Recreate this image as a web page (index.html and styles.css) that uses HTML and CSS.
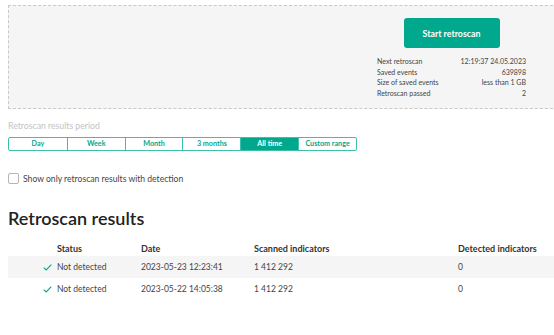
FILE: index.html
```html
<!DOCTYPE html>
<html>
<head>
<meta charset="utf-8">
<link rel="stylesheet" href="styles.css">
</head>
<body>
<div class="page">
  <section class="panel">
    <div class="scan-box">
      <button class="btn-start">Start retroscan</button>
      <div class="info">
        <div class="info-row"><span>Next retroscan</span><span>12:19:37 24.05.2023</span></div>
        <div class="info-row"><span>Saved events</span><span>639898</span></div>
        <div class="info-row"><span>Size of saved events</span><span>less than 1 GB</span></div>
        <div class="info-row"><span>Retroscan passed</span><span>2</span></div>
      </div>
    </div>
  </section>

  <div class="period-label">Retroscan results period</div>
  <div class="segments">
    <div class="seg">Day</div>
    <div class="seg">Week</div>
    <div class="seg">Month</div>
    <div class="seg">3 months</div>
    <div class="seg active">All time</div>
    <div class="seg">Custom range</div>
  </div>

  <label class="check">
    <span class="box"></span>
    <span>Show only retroscan results with detection</span>
  </label>

  <h1 class="title">Retroscan results</h1>

  <div class="table">
    <div class="trow head">
      <span></span><span>Status</span><span>Date</span><span>Scanned indicators</span><span>Detected indicators</span>
    </div>
    <div class="trow odd">
      <span class="ic"><svg width="9" height="7" viewBox="0 0 9 7"><path d="M0.7 3.6 L3.2 6 L8.3 0.7" fill="none" stroke="#00a88e" stroke-width="1.1"/></svg></span>
      <span>Not detected</span><span>2023-05-23 12:23:41</span><span>1 412 292</span><span>0</span>
    </div>
    <div class="trow">
      <span class="ic"><svg width="9" height="7" viewBox="0 0 9 7"><path d="M0.7 3.6 L3.2 6 L8.3 0.7" fill="none" stroke="#00a88e" stroke-width="1.1"/></svg></span>
      <span>Not detected</span><span>2023-05-22 14:05:38</span><span>1 412 292</span><span>0</span>
    </div>
  </div>
</div>
</body>
</html>
```
FILE: styles.css
```css
html, body {
  margin: 0;
  padding: 0;
  overflow: hidden;
  background: #fff;
}
body {
  font-family: Lato, "Noto Sans", sans-serif;
  color: #333;
}
.page {
  width: 600px;
  padding: 5px 0 0 8px;
}
.panel {
  width: 560px;
  height: 104px;
  box-sizing: border-box;
  border: 1px dashed #c9c9c9;
  background: #f5f5f5;
  display: flex;
  justify-content: flex-end;
  padding: 12px 41px 0 0;
}
.scan-box {
  width: 149px;
  display: flex;
  flex-direction: column;
  align-items: center;
}
.btn-start {
  width: 96px;
  height: 30px;
  border: none;
  border-radius: 3px;
  background: #00a88e;
  color: #fff;
  font-family: inherit;
  font-size: 8.8px;
  font-weight: 700;
  padding: 0;
}
.info {
  width: 100%;
  margin-top: 8px;
  font-size: 7px;
  color: #444;
}
.info-row {
  display: flex;
  justify-content: space-between;
  height: 10.5px;
  line-height: 10.5px;
}
.period-label {
  margin-top: 11px;
  font-size: 8.7px;
  color: #c4c4c4;
  line-height: 12px;
}
.segments {
  margin-top: 5px;
  width: 349px;
  height: 14px;
  box-sizing: border-box;
  border: 1px solid #3fbfa8;
  border-radius: 2px;
  display: grid;
  grid-template-columns: repeat(6, 1fr);
}
.seg {
  border-left: 1px solid #3fbfa8;
  color: #00a88e;
  font-size: 7.2px;
  font-weight: 700;
  text-align: center;
  line-height: 12px;
}
.seg:first-child { border-left: none; }
.seg.active {
  background: #00a88e;
  color: #fff;
}
.check {
  margin-top: 22px;
  display: flex;
  align-items: center;
  gap: 4px;
  font-size: 8.6px;
  color: #444;
}
.box {
  width: 9px;
  height: 9px;
  border: 1px solid #b5b5b5;
  border-radius: 2px;
  background: #fff;
}
.title {
  margin: 23px 0 0;
  font-size: 18px;
  font-weight: 600;
  color: #222;
  line-height: 22px;
}
.table {
  margin-top: 11px;
  width: 546px;
}
.trow {
  display: grid;
  grid-template-columns: 49px 84px 113px 204px 1fr;
  height: 22px;
  align-items: center;
  font-size: 8.5px;
  color: #444;
}
.trow.head {
  height: 16px;
  font-size: 9px;
  font-weight: 700;
  color: #333;
}
.trow.odd { background: #f5f5f5; }
.ic {
  display: flex;
  justify-content: flex-end;
  padding-right: 5px;
}
```
